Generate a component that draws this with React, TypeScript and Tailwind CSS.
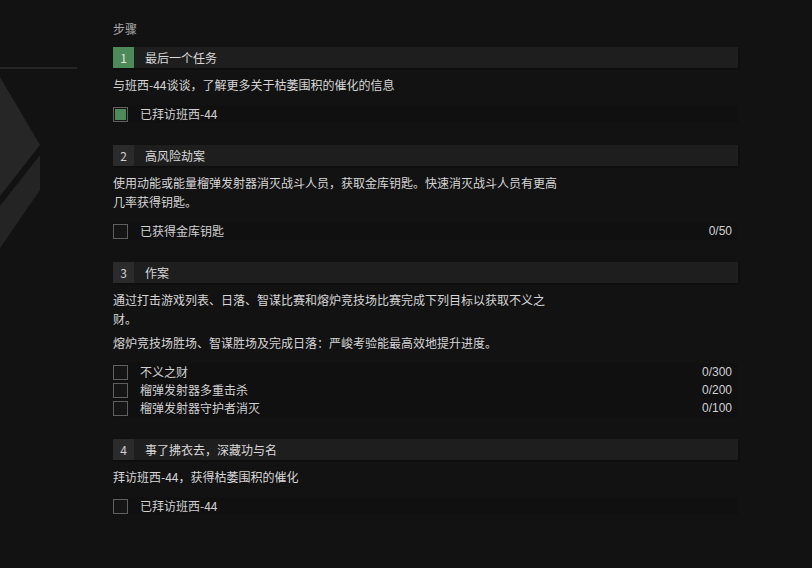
import React from "react";

type Goal = { label: string; done?: boolean; progress?: string };
type Step = { n: number; title: string; active?: boolean; paras: string[]; goals: Goal[] };

const steps: Step[] = [
  {
    n: 1,
    title: "最后一个任务",
    active: true,
    paras: ["与班西-44谈谈，了解更多关于枯萎围积的催化的信息"],
    goals: [{ label: "已拜访班西-44", done: true }],
  },
  {
    n: 2,
    title: "高风险劫案",
    paras: ["使用动能或能量榴弹发射器消灭战斗人员，获取金库钥匙。快速消灭战斗人员有更高几率获得钥匙。"],
    goals: [{ label: "已获得金库钥匙", progress: "0/50" }],
  },
  {
    n: 3,
    title: "作案",
    paras: [
      "通过打击游戏列表、日落、智谋比赛和熔炉竞技场比赛完成下列目标以获取不义之财。",
      "熔炉竞技场胜场、智谋胜场及完成日落：严峻考验能最高效地提升进度。",
    ],
    goals: [
      { label: "不义之财", progress: "0/300" },
      { label: "榴弹发射器多重击杀", progress: "0/200" },
      { label: "榴弹发射器守护者消灭", progress: "0/100" },
    ],
  },
  {
    n: 4,
    title: "事了拂衣去，深藏功与名",
    paras: ["拜访班西-44，获得枯萎围积的催化"],
    goals: [{ label: "已拜访班西-44" }],
  },
];

function Checkbox({ done }: { done?: boolean }) {
  return (
    <div className="flex h-[15px] w-[15px] shrink-0 items-center justify-center border border-[#5f5f5f] bg-[#151515]">
      {done && <div className="h-[11px] w-[11px] bg-[#4c8a5a]" />}
    </div>
  );
}

function StepBlock({ step }: { step: Step }) {
  return (
    <div className="mb-[22px]">
      <div className="flex h-[21px] items-stretch bg-[#1e1e1e] shadow-[1px_1px_2px_rgba(0,0,0,0.4)]">
        <div
          className={
            step.active
              ? "flex w-[21px] items-center justify-center bg-[#4c8a5a] text-[12px] text-[#e4e4e4]"
              : "flex w-[21px] items-center justify-center bg-[#2b2b2b] text-[12px] text-[#d0d0d0]"
          }
        >
          {step.n}
        </div>
        <div className="flex items-center pl-[11px] text-[12px] text-[#d8d8d8]">{step.title}</div>
      </div>
      <div className="mt-[7px] flex flex-col gap-[5px]">
        {step.paras.map((p) => (
          <p key={p} className="max-w-[449px] text-[12px] leading-[19px] text-[#d6d6d6]">
            {p}
          </p>
        ))}
      </div>
      <div className="mt-[11px] flex flex-col">
        {step.goals.map((g) => (
          <div key={g.label} className="flex h-[18px] items-center bg-[#101010] pr-[6px]">
            <Checkbox done={g.done} />
            <span className="ml-[12px] text-[12px] text-[#d0d0d0]">{g.label}</span>
            {g.progress && (
              <span className="ml-auto text-[12px] text-[#d0d0d0] [font-family:'Liberation_Sans','Noto_Sans_CJK_SC',sans-serif]">
                {g.progress}
              </span>
            )}
          </div>
        ))}
      </div>
    </div>
  );
}

export default function App() {
  return (
    <div className="flex h-[568px] w-[812px] overflow-hidden bg-[#121212] [font-family:'Noto_Sans_CJK_SC',sans-serif]">
      <div className="w-[113px] shrink-0">
        <svg width="113" height="260" viewBox="0 0 113 260">
          <rect x="0" y="67.5" width="77" height="1" fill="#3a3a3a" />
          <polygon points="0,77 40,145 0,196" fill="#262626" />
          <polygon points="40,155 40,190 0,248 0,206" fill="#242424" />
        </svg>
      </div>
      <div className="w-[625px] shrink-0 pt-[20px]">
        <div className="mb-[10px] text-[12px] leading-[17px] text-[#a8a8a8]">步骤</div>
        {steps.map((s) => (
          <StepBlock key={s.n} step={s} />
        ))}
      </div>
    </div>
  );
}
